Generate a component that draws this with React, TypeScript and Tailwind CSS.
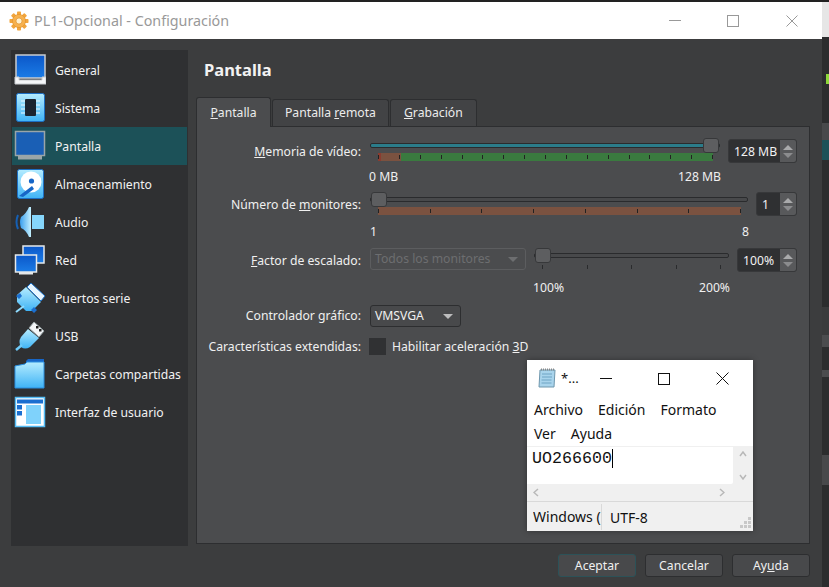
const font = { sans: "font-['Noto_Sans',sans-serif]" }

function IconFrame({ children }: { children: React.ReactNode }) {
  return (
    <svg width="32" height="32" viewBox="0 0 32 32" className="shrink-0">
      <defs>
        <linearGradient id="scr" x1="0" y1="0" x2="0" y2="1">
          <stop offset="0" stopColor="#0b57c9" />
          <stop offset="1" stopColor="#1b7ce6" />
        </linearGradient>
        <linearGradient id="sky" x1="0" y1="0" x2="0" y2="1">
          <stop offset="0" stopColor="#b5ecff" />
          <stop offset="1" stopColor="#3fb3f5" />
        </linearGradient>
        <linearGradient id="cone" x1="0" y1="0" x2="1" y2="0">
          <stop offset="0" stopColor="#3a9fee" />
          <stop offset="1" stopColor="#c4f0ff" />
        </linearGradient>
      </defs>
      {children}
    </svg>
  )
}

const sideItems: { label: string; icon: React.ReactNode; active?: boolean }[] = [
  {
    label: "General",
    icon: (
      <>
        <rect x="2" y="1" width="29" height="23" fill="url(#scr)" stroke="#c9ccd0" strokeWidth="1.5" />
        <path d="M1 23h4v3h23v-3h4v7H1z" fill="#f4f6f8" stroke="#c9ccd0" />
      </>
    ),
  },
  {
    label: "Sistema",
    icon: (
      <>
        <rect x="2.5" y="1.5" width="28" height="28" rx="2" fill="url(#sky)" stroke="#1c6fc4" />
        <g stroke="#eaf8ff" strokeWidth="1">
          <path d="M7 9h19M7 13h19M7 17h19M7 21h19" />
        </g>
        <rect x="11" y="7" width="11" height="17" rx="1" fill="#1c2530" />
      </>
    ),
  },
  {
    label: "Pantalla",
    active: true,
    icon: (
      <>
        <rect x="1.5" y="1.5" width="29" height="24" fill="#1a5fb5" stroke="#9aa5a8" strokeWidth="1.5" />
        <rect x="4" y="26" width="24" height="3.5" fill="#9aa5a8" />
      </>
    ),
  },
  {
    label: "Almacenamiento",
    icon: (
      <>
        <rect x="3.5" y="1.5" width="26" height="29" rx="2" fill="url(#sky)" stroke="#1c6fc4" />
        <circle cx="17" cy="14" r="10.5" fill="#fff" />
        <circle cx="17.5" cy="13" r="2.6" fill="#1766c7" />
        <path d="M5 28l13-10 2 3-11 8z" fill="#1766c7" />
      </>
    ),
  },
  {
    label: "Audio",
    icon: (
      <>
        <path d="M7 11Q12 8 15 1L17 1V31L15 31Q12 24 7 22Q5 16 7 11z" fill="url(#cone)" />
        <rect x="18" y="9" width="12" height="14" fill="#86d6fb" />
        <path d="M4 9Q1 16 4 23" fill="none" stroke="#155fb3" strokeWidth="2" />
      </>
    ),
  },
  {
    label: "Red",
    icon: (
      <>
        <rect x="9" y="2" width="21" height="17" fill="url(#scr)" stroke="#e5e8ea" strokeWidth="1.5" />
        <rect x="1.5" y="11" width="21" height="17" fill="url(#scr)" stroke="#e5e8ea" strokeWidth="1.5" />
        <rect x="5" y="28" width="14" height="2.5" fill="#e5e8ea" />
      </>
    ),
  },
  {
    label: "Puertos serie",
    icon: (
      <>
        <path d="M17 1l14 13-4 5L13 5z" fill="#e8f6ff" stroke="#1c6fc4" />
        <path d="M12 5l15 15-9 9H12L3 20V13z" fill="url(#sky)" />
        <path d="M2 14l4-3 2 3-3 3zM17 28l3-3 3 3-3 3z" fill="#1b6fd0" />
        <path d="M10 24l-8 6" stroke="#8fdcff" strokeWidth="2" />
      </>
    ),
  },
  {
    label: "USB",
    icon: (
      <>
        <path d="M20 2l10 9-5 6-10-9z" fill="#f4f6f8" stroke="#9aa5a8" />
        <rect x="22" y="6" width="2.5" height="2.5" fill="#222" />
        <rect x="25" y="9" width="2.5" height="2.5" fill="#222" />
        <path d="M14 9l11 9-9 9q-5 3-9 0-3-5 0-10z" fill="url(#sky)" />
        <path d="M8 25l-6 5" stroke="#6fcbfa" strokeWidth="2.5" />
      </>
    ),
  },
  {
    label: "Carpetas compartidas",
    icon: (
      <>
        <path d="M12 3l2-2h16v6H12z" fill="#1766c7" />
        <path d="M1 8l10-2 2-2h17v26H1z" fill="url(#sky)" stroke="#2a8fe0" />
      </>
    ),
  },
  {
    label: "Interfaz de usuario",
    icon: (
      <>
        <rect x="1.5" y="1.5" width="29" height="29" fill="#fff" stroke="#55bdf6" strokeWidth="1.5" />
        <rect x="3" y="3.5" width="26" height="4" fill="#1b6fd0" />
        <rect x="3" y="9" width="5" height="4.5" fill="#1b6fd0" />
        <rect x="3" y="15" width="5" height="4.5" fill="#1b6fd0" />
        <rect x="12" y="9" width="15" height="19" fill="#7fd2fb" />
      </>
    ),
  },
]

function Sidebar() {
  return (
    <div className="w-[177px] shrink-0 bg-[#2f3032] p-px">
      {sideItems.map((item) => (
        <div
          key={item.label}
          className={`flex h-[38px] items-center pl-[2px] ${item.active ? "bg-[#1c5158]" : ""}`}
        >
          <IconFrame>{item.icon}</IconFrame>
          <span className="ml-[9px] pt-[2px] text-[12.2px] text-[#f2f2f2]">{item.label}</span>
        </div>
      ))}
    </div>
  )
}

function Tab({ children, active }: { children: React.ReactNode; active?: boolean }) {
  return (
    <div
      className={`flex items-center justify-center rounded-t-[3px] border border-b-0 border-[#2d2e30] pt-px text-[12.2px] text-[#ececec] ${
        active ? "relative z-10 -mb-px h-[30px] w-[75px] bg-[#4b4c4e]" : "mt-[2px] h-[27px] bg-[#424345]"
      }`}
    >
      {children}
    </div>
  )
}

function Spin({ value, width }: { value: string; width: string }) {
  return (
    <div className={`flex h-[24px] shrink-0 overflow-hidden rounded-[3px] border border-[#37383a] bg-[#2f3032] ${width}`}>
      <span className="flex-1 pl-[5px] text-[12.2px] leading-[24px] text-[#f2f2f2]">{value}</span>
      <div className="flex w-[16px] flex-col items-center justify-center gap-[3px] bg-[#58595b]">
        <span className="h-0 w-0 border-x-[5px] border-b-[5px] border-x-transparent border-b-[#a9aaab]" />
        <span className="h-0 w-0 border-x-[5px] border-t-[5px] border-x-transparent border-t-[#8b8c8e]" />
      </div>
    </div>
  )
}

function Handle({ side }: { side: "left" | "right" }) {
  return (
    <div
      className={`absolute top-[-6px] h-[15px] w-[16px] rounded-[3px] border border-[#37383a] bg-[#5d5e60] ${
        side === "left" ? "left-0" : "right-0"
      }`}
    />
  )
}

function Ticks({ count, color }: { count: number; color: string }) {
  return (
    <div className="flex justify-between">
      {Array.from({ length: count }).map((_, i) => (
        <span key={i} className={`h-[4px] w-px ${color}`} />
      ))}
    </div>
  )
}

function RowLabel({ children }: { children: React.ReactNode }) {
  return (
    <div className="w-[165px] shrink-0 whitespace-nowrap pr-px text-right text-[12.2px] leading-[26px] text-[#f0f0f0]">
      {children}
    </div>
  )
}

function SliderRow() {
  return (
    <>
      {/* memoria */}
      <div className="flex gap-[8px]">
        <RowLabel>
          <u>M</u>emoria de vídeo:
        </RowLabel>
        <div className="flex-1 pt-[4px]">
          <div className="relative h-[5px] rounded-[2px] border border-[#2a2b2d] bg-[#2b7c8a]">
            <Handle side="right" />
          </div>
          <div className="ml-[8px] mr-[7px] mt-[5px] flex h-[8px]">
            <div className="w-[3px] bg-[#8a3c30]" />
            <div className="w-[20px] bg-[#7b5240]" />
            <div className="flex-1 bg-[#3a7a3f]" />
          </div>
          <div className="ml-[8px] mr-[7px] mt-[-6px] h-[4px]">
            <Ticks count={17} color="bg-[#222]" />
          </div>
          <div className="-ml-px mr-[-1px] mt-[10px] flex justify-between text-[12.2px] leading-[16px] text-[#f0f0f0]">
            <span>0 MB</span>
            <span>128 MB</span>
          </div>
        </div>
        <Spin value="128 MB" width="w-[69px]" />
      </div>

      {/* monitores */}
      <div className="mt-[7px] flex gap-[8px]">
        <RowLabel>
          Número de <u>m</u>onitores:
        </RowLabel>
        <div className="flex-1 pt-[5px]">
          <div className="relative h-[5px] rounded-[2px] border border-[#2a2b2d] bg-[#48494b]">
            <Handle side="left" />
          </div>
          <div className="ml-[8px] mr-[7px] mt-[5px] h-[8px] bg-[#7b5240]" />
          <div className="ml-[8px] mr-[7px] mt-[-6px] h-[4px]">
            <Ticks count={8} color="bg-[#222]" />
          </div>
          <div className="mr-[-1px] mt-[11px] flex justify-between text-[12.2px] leading-[16px] text-[#f0f0f0]">
            <span>1</span>
            <span>8</span>
          </div>
        </div>
        <Spin value="1" width="w-[41px]" />
      </div>

      {/* escalado */}
      <div className="mt-[8px] flex gap-[8px]">
        <RowLabel>
          <u>F</u>actor de escalado:
        </RowLabel>
        <div className="flex flex-1 flex-col">
          <div className="flex gap-[8px]">
            <div className="flex h-[22px] w-[156px] shrink-0 items-center justify-between rounded-[3px] border border-[#5c5d5f] bg-[#4b4c4e] pl-[4px] pr-[7px] pt-px text-[12.2px] text-[#6d6e70]">
              Todos los monitores
              <span className="h-0 w-0 border-x-[5px] border-t-[5px] border-x-transparent border-t-[#6d6e70]" />
            </div>
            <div className="flex-1 pt-[5px]">
              <div className="relative h-[5px] rounded-[2px] border border-[#2a2b2d] bg-[#48494b]">
                <Handle side="left" />
              </div>
              <div className="ml-[8px] mr-[8px] mt-[7px]">
                <Ticks count={5} color="bg-[#2a2b2d]" />
              </div>
            </div>
          </div>
          <div className="ml-[163px] mr-[-1px] mt-[10px] flex justify-between text-[12.2px] leading-[16px] text-[#f0f0f0]">
            <span>100%</span>
            <span>200%</span>
          </div>
        </div>
        <Spin value="100%" width="w-[60px]" />
      </div>
    </>
  )
}

function Gear() {
  return (
    <svg width="20" height="20" viewBox="0 0 20 20">
      <g fill="#f2a53d">
        {[0, 45, 90, 135, 180, 225, 270, 315].map((deg) => (
          <rect key={deg} x="8" y="0.5" width="4" height="5" rx="0.8" transform={`rotate(${deg} 10 10)`} />
        ))}
      </g>
      <circle cx="10" cy="10" r="6.6" fill="#f7b14e" stroke="#d98a24" strokeWidth="0.5" />
      <circle cx="10" cy="10" r="3" fill="#fff1d0" stroke="#d98a24" strokeWidth="0.6" />
    </svg>
  )
}

function Dialog() {
  return (
    <div className="flex w-[822px] shrink-0 flex-col bg-[#3c3d3e]">
      <div className="flex h-[37px] items-center bg-white pl-[9px]">
        <Gear />
        <span className="ml-[5px] text-[14.3px] text-[#999]">PL1-Opcional - Configuración</span>
        <div className="ml-auto flex items-center">
          <span className="h-px w-[12px] bg-[#999]" />
          <span className="ml-[46px] h-[12px] w-[12px] border border-[#999]" />
          <svg width="12" height="12" viewBox="0 0 12 12" className="ml-[47px] mr-[24px]">
            <path d="M0.5 0.5l11 11M11.5 0.5l-11 11" stroke="#999" />
          </svg>
        </div>
      </div>

      <div className="flex gap-[8px] pl-[11px] pr-[12px] pt-[11px]">
        <Sidebar />
        <div className="flex h-[496px] flex-1 flex-col">
          <div className="flex h-[47px] items-start">
            <h1 className="pl-[8px] pt-[8px] text-[16.5px] font-bold text-[#f2f2f2]">Pantalla</h1>
          </div>
          <div className="flex gap-px pl-0">
            <Tab active>
              <span>
                <u>P</u>antalla
              </span>
            </Tab>
            <Tab>
              <span className="px-[12px]">
                Pantalla <u>r</u>emota
              </span>
            </Tab>
            <Tab>
              <span className="px-[13px]">
                <u>G</u>rabación
              </span>
            </Tab>
          </div>
          <div className="h-[418px] border border-[#2d2e30] bg-[#4b4c4e] pr-[12px] pt-[12px]">
            <SliderRow />
            <div className="mt-[8px] flex items-center gap-[8px]">
              <div className="w-[165px] shrink-0 pr-px pt-px text-right text-[12.2px] leading-[22px] text-[#f0f0f0]">
                Controlador gráfico:
              </div>
              <div className="flex h-[22px] w-[91px] items-center justify-between rounded-[3px] border border-[#2d2e30] bg-[#48494b] pl-[4px] pr-[7px] pt-px text-[12.2px] text-[#f0f0f0]">
                VMSVGA
                <span className="h-0 w-0 border-x-[5px] border-t-[5px] border-x-transparent border-t-[#bdbdbe]" />
              </div>
            </div>
            <div className="mt-[10px] flex items-center gap-[8px]">
              <div className="w-[165px] shrink-0 whitespace-nowrap pr-px pt-px text-right text-[12.2px] text-[#f0f0f0]">
                Características extendidas:
              </div>
              <span className="-ml-px h-[17px] w-[17px] bg-[#303133]" />
              <span className="-ml-[2px] pt-px text-[12.2px] text-[#f0f0f0]">
                Habilitar aceleración <u>3</u>D
              </span>
            </div>
          </div>
        </div>
      </div>

      <div className="flex justify-end gap-[9px] pr-[12px] pt-[8px]">
        <button className="h-[23px] w-[78px] rounded-[3px] border border-[#2c5258] bg-[#48494b] pt-px text-[12.2px] text-[#f0f0f0]">
          Aceptar
        </button>
        <button className="h-[23px] w-[78px] rounded-[3px] border border-[#2d2e30] bg-[#48494b] pt-px text-[12.2px] text-[#f0f0f0]">
          Cancelar
        </button>
        <button className="h-[23px] w-[78px] rounded-[3px] border border-[#2d2e30] bg-[#48494b] pt-px text-[12.2px] text-[#f0f0f0]">
          Ay<u>u</u>da
        </button>
      </div>
    </div>
  )
}

function Notepad() {
  return (
    <div className="absolute left-[527px] top-[360px] flex h-[171px] w-[226px] flex-col bg-[#f0f0f0] text-[#111] shadow-[0_0_6px_rgba(0,0,0,0.35)]">
      <div className="flex h-[37px] items-center bg-white pl-[10px]">
        <svg width="20" height="21" viewBox="0 0 20 21">
          <path d="M3 2h15l-1 17H2z" fill="#a9d4ec" stroke="#6f97ad" />
          <path d="M5 6h10M5 9h10M4.500 12h10M4.500 15h10" stroke="#6fa4c4" />
          <path d="M4 1.500h14" stroke="#888" strokeDasharray="1 1" strokeWidth="2" />
        </svg>
        <span className="ml-[4px] text-[13px]">*...</span>
        <span className="ml-[21px] h-px w-[12px] bg-[#111]" />
        <span className="ml-[46px] h-[12px] w-[12px] border border-[#111]" />
        <svg width="13" height="13" viewBox="0 0 13 13" className="ml-[46px]">
          <path d="M0.500 0.500l12 12M12.500 0.500l-12 12" stroke="#111" />
        </svg>
      </div>
      <div className="bg-white pl-[7px] pt-px text-[14px] leading-[24px]">
        <div className="flex gap-[15px]">
          <span>Archivo</span>
          <span>Edición</span>
          <span>Formato</span>
        </div>
        <div className="flex gap-[15px]">
          <span>Ver</span>
          <span>Ayuda</span>
        </div>
      </div>
      <div className="flex h-[38px] border-t border-[#f0f0f0]">
        <div className="flex w-[206px] items-start rounded-br-[2px] bg-white pl-[5px]">
          <span className="font-['Liberation_Mono',monospace] text-[16.67px] leading-[23px]">UO266600</span>
          <span className="mt-[2px] h-[19px] w-px bg-black" />
        </div>
        <div className="flex flex-1 flex-col items-center justify-between py-[4px] text-[#b8b8b8]">
          <svg width="8" height="6" viewBox="0 0 8 6"><path d="M1 5l3-4 3 4" fill="none" stroke="currentColor" strokeWidth="1.5" /></svg>
          <svg width="8" height="6" viewBox="0 0 8 6"><path d="M1 1l3 4 3-4" fill="none" stroke="currentColor" strokeWidth="1.5" /></svg>
        </div>
      </div>
      <div className="flex h-[18px] items-center justify-between border-b border-[#d9d9d9] pl-[6px] pr-[28px] text-[#b8b8b8]">
        <svg width="6" height="9" viewBox="0 0 6 9"><path d="M5 1L1 4.500 5 8" fill="none" stroke="currentColor" strokeWidth="1.5" /></svg>
        <svg width="6" height="9" viewBox="0 0 6 9"><path d="M1 1l4 3.500L1 8" fill="none" stroke="currentColor" strokeWidth="1.5" /></svg>
      </div>
      <div className="flex flex-1 items-center pl-[6px] pt-px text-[14px]">
        <span className="w-[69px] overflow-hidden whitespace-nowrap border-r border-[#d9d9d9] leading-[26px]">Windows (</span>
        <span className="ml-[8px]">UTF-8</span>
        <svg width="12" height="12" viewBox="0 0 12 12" className="ml-auto mr-px mt-[12px]">
          <path d="M8 0h3v3H8zM4 4h3v3H4zM8 4h3v3H8zM0 8h3v3H0zM4 8h3v3H4zM8 8h3v3H8z" fill="#c8c8c8" />
        </svg>
      </div>
    </div>
  )
}

export default function App() {
  return (
    <div className={`relative h-[587px] w-[829px] overflow-hidden bg-[#2a2b2c] ${font.sans}`}>
      <div className="h-[2px] bg-[#222]" />
      <div className="flex h-[585px]">
        <Dialog />
        <div className="flex flex-1 flex-col bg-[#2c2d2e]">
          <div className="h-[35px] bg-[#e6e6e6]" />
          <div className="mt-[37px] ml-[4px] h-[10px] bg-[#8ed83a]" />
          <div className="mt-[39px] h-[17px] bg-[#48494b]" />
          <div className="h-[20px] bg-[#1c5158]" />
          <div className="mt-[147px] h-[28px] bg-[#3a3b3c]" />
          <div className="h-[12px] bg-[#4b4c4e]" />
          <div className="mt-[23px] h-[7px] bg-[#4b4c4e]" />
          <div className="mt-[78px] h-[30px] bg-[#48494b]" />
        </div>
      </div>
      <Notepad />
    </div>
  )
}
